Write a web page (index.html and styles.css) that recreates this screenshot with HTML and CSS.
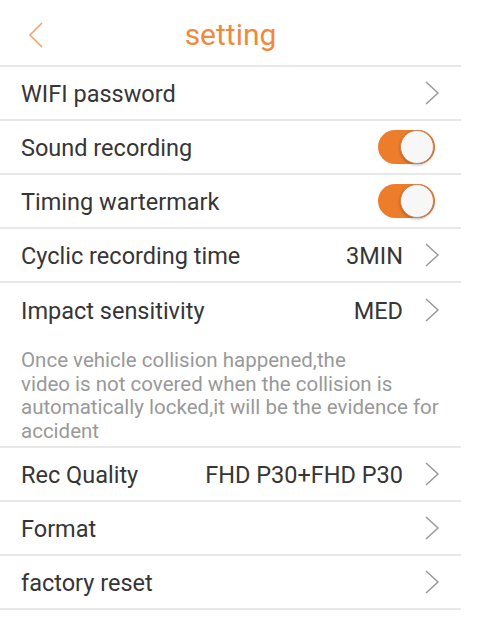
FILE: index.html
```html
<!DOCTYPE html>
<html>
<head>
<meta charset="utf-8">
<link rel="stylesheet" href="styles.css">
</head>
<body>
<div class="page">
  <header class="header">
    <svg class="back" width="16" height="26" viewBox="0 0 16 26"><polyline points="14,1 2,13 14,25" fill="none" stroke="#F4A46A" stroke-width="1.6"/></svg>
    <div class="title">setting</div>
  </header>
  <div class="list">
    <div class="row"><span class="label">WIFI password</span><span class="right"><svg class="chev" width="16" height="24" viewBox="0 0 16 24"><polyline points="2,1 14,12 2,23" fill="none" stroke="#9a9a9a" stroke-width="1.5"/></svg></span></div>
    <div class="row"><span class="label">Sound recording</span><span class="toggle"></span></div>
    <div class="row"><span class="label">Timing wartermark</span><span class="toggle"></span></div>
    <div class="row"><span class="label">Cyclic recording time</span><span class="right"><span class="value">3MIN</span><svg class="chev" width="16" height="24" viewBox="0 0 16 24"><polyline points="2,1 14,12 2,23" fill="none" stroke="#9a9a9a" stroke-width="1.5"/></svg></span></div>
    <div class="row noline"><span class="label">Impact sensitivity</span><span class="right"><span class="value">MED</span><svg class="chev" width="16" height="24" viewBox="0 0 16 24"><polyline points="2,1 14,12 2,23" fill="none" stroke="#9a9a9a" stroke-width="1.5"/></svg></span></div>
    <div class="desc">Once vehicle collision happened,the<br>video is not covered when the collision is<br>automatically locked,it will be the evidence for<br>accident</div>
    <div class="row"><span class="label">Rec Quality</span><span class="right"><span class="value">FHD P30+FHD P30</span><svg class="chev" width="16" height="24" viewBox="0 0 16 24"><polyline points="2,1 14,12 2,23" fill="none" stroke="#9a9a9a" stroke-width="1.5"/></svg></span></div>
    <div class="row"><span class="label">Format</span><span class="right"><svg class="chev" width="16" height="24" viewBox="0 0 16 24"><polyline points="2,1 14,12 2,23" fill="none" stroke="#9a9a9a" stroke-width="1.5"/></svg></span></div>
    <div class="row"><span class="label">factory reset</span><span class="right"><svg class="chev" width="16" height="24" viewBox="0 0 16 24"><polyline points="2,1 14,12 2,23" fill="none" stroke="#9a9a9a" stroke-width="1.5"/></svg></span></div>
  </div>
</div>
</body>
</html>
```

FILE: styles.css
```css
html, body {
  margin: 0;
  padding: 0;
  background: #ffffff;
}
body {
  font-family: Roboto, "Noto Sans", "Liberation Sans", sans-serif;
  color: #333333;
}
.page {
  width: 484px;
  height: 626px;
  overflow: hidden;
}
.header {
  position: relative;
  height: 65px;
  margin-right: 23px;
  border-bottom: 2px solid #e8e8e8;
  display: flex;
  align-items: center;
  justify-content: center;
}
.back {
  position: absolute;
  left: 28px;
  top: 22px;
}
.title {
  font-size: 30px;
  color: #F0893D;
  margin-left: 0px;
  margin-top: 4px;
}
.list {
  margin-right: 23px;
}
.row {
  height: 52px;
  border-bottom: 2px solid #e8e8e8;
  display: flex;
  align-items: center;
  justify-content: space-between;
  padding: 0 21px 0 21px;
}
.row.noline {
  border-bottom: none;
  height: 53px;
}
.label {
  font-size: 23.5px;
  color: #363636;
  margin-top: 2px;
}
.right {
  display: flex;
  align-items: center;
  gap: 21px;
}
.value {
  font-size: 23.5px;
  color: #363636;
  margin-top: 2px;
}
.chev {
  display: block;
}
.toggle {
  position: relative;
  width: 57px;
  height: 34px;
  border-radius: 17px;
  background: #EE7D2B;
  margin-right: 5px;
}
.toggle::after {
  content: "";
  position: absolute;
  right: 1px;
  top: 0px;
  width: 32px;
  height: 32px;
  border-radius: 50%;
  background: #f7f7f7;
  border: 1px solid #c9865a;
  box-shadow: 0 1px 3px rgba(0,0,0,0.3);
}
.desc {
  font-size: 20.5px;
  line-height: 23.5px;
  color: #999999;
  padding: 13px 0 3px 21px;
  border-bottom: 2px solid #e8e8e8;
}
```
